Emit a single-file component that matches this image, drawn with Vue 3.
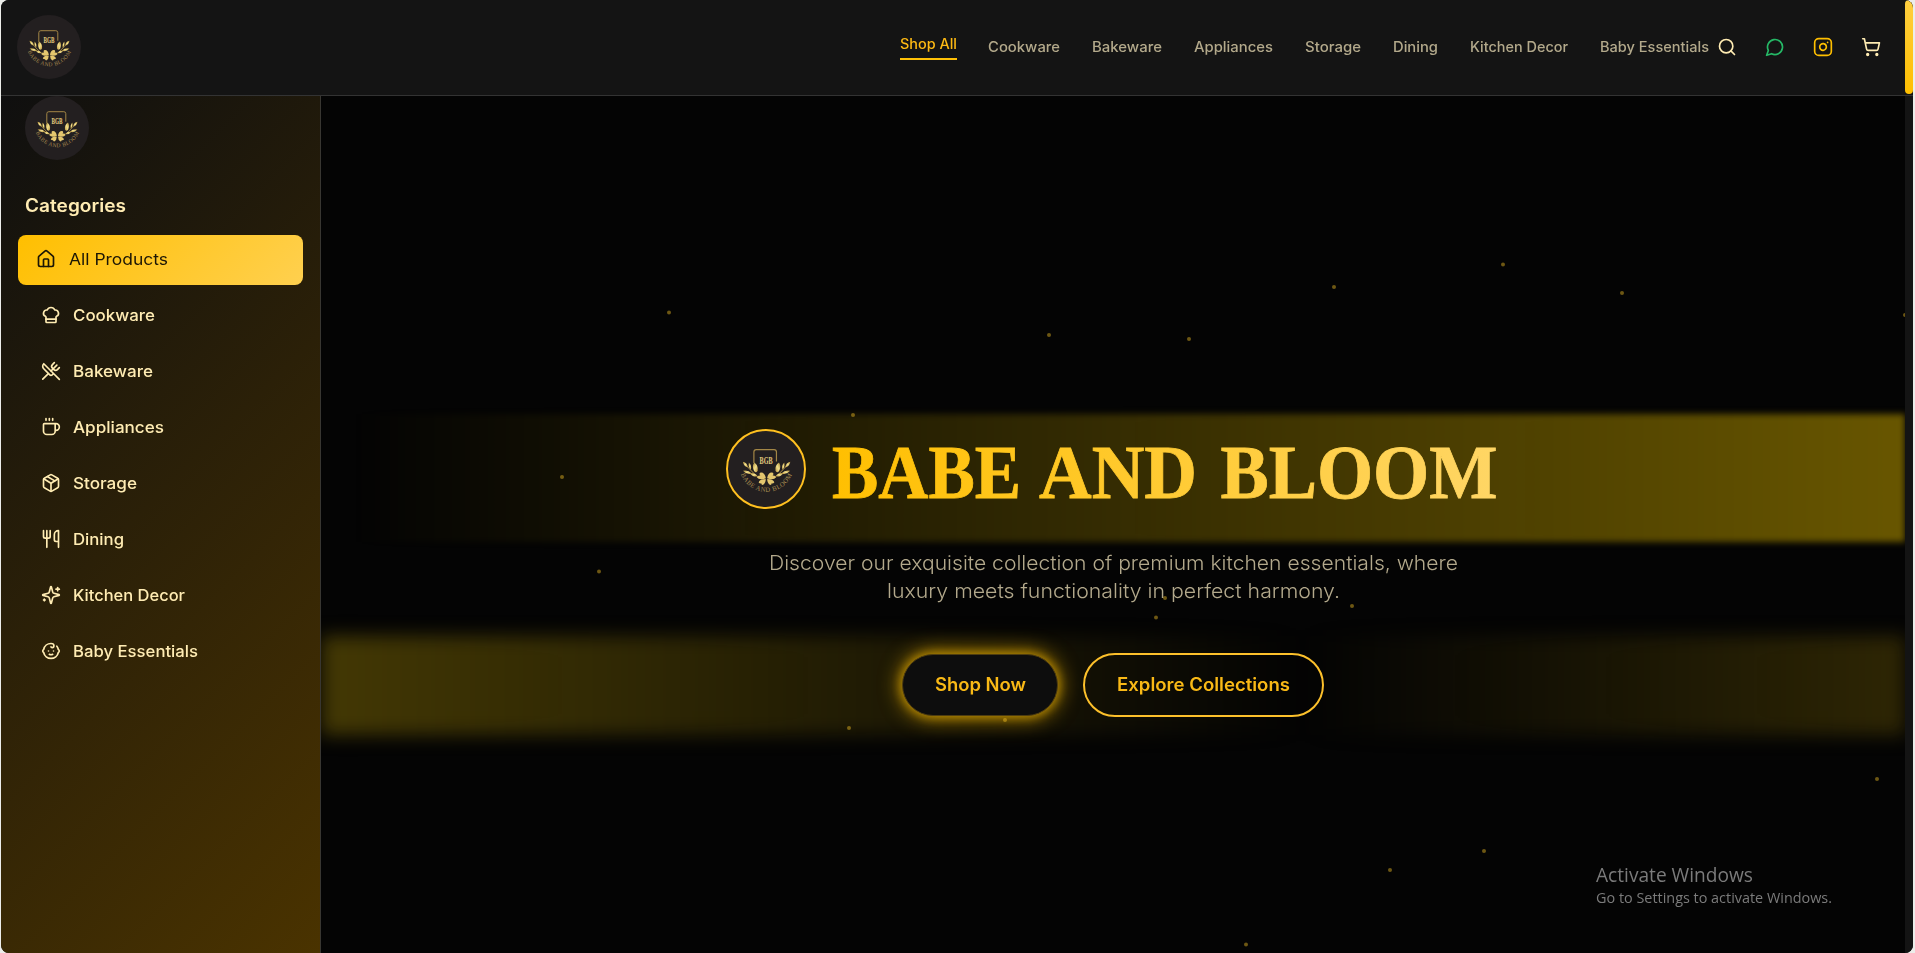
<script setup>
const nav = [
  { label: 'Shop All', width: 57, active: true },
  { label: 'Cookware', width: 72 },
  { label: 'Bakeware', width: 70 },
  { label: 'Appliances', width: 79 },
  { label: 'Storage', width: 56 },
  { label: 'Dining', width: 45 },
  { label: 'Kitchen Decor', width: 98 },
  { label: 'Baby Essentials', width: 109 },
]

const categories = [
  { label: 'Cookware', width: 82, icon: 'chef' },
  { label: 'Bakeware', width: 80, icon: 'utensilsCrossed' },
  { label: 'Appliances', width: 91, icon: 'coffee' },
  { label: 'Storage', width: 64, icon: 'box' },
  { label: 'Dining', width: 51, icon: 'utensils' },
  { label: 'Kitchen Decor', width: 112, icon: 'sparkles' },
  { label: 'Baby Essentials', width: 125, icon: 'baby' },
]

const icons = {
  home: ['M15 21v-8a1 1 0 0 0-1-1h-4a1 1 0 0 0-1 1v8', 'M3 10a2 2 0 0 1 .709-1.528l7-5.999a2 2 0 0 1 2.582 0l7 5.999A2 2 0 0 1 21 10v9a2 2 0 0 1-2 2H5a2 2 0 0 1-2-2z'],
  chef: ['M17 21a1 1 0 0 0 1-1v-5.35c0-.457.316-.844.727-1.041a4 4 0 0 0-2.134-7.589 5 5 0 0 0-9.186 0 4 4 0 0 0-2.134 7.588c.411.198.727.585.727 1.041V20a1 1 0 0 0 1 1Z', 'M6 17h12'],
  utensilsCrossed: ['m16 2-2.3 2.3a3 3 0 0 0 0 4.2l1.8 1.8a3 3 0 0 0 4.2 0L22 8', 'M15 15 3.3 3.3a4.2 4.2 0 0 0 0 6l7.3 7.3c.7.7 2 .7 2.8 0L15 15Zm0 0 7 7', 'm2.1 21.8 6.4-6.3', 'm19 5-7 7'],
  coffee: ['M10 2v2', 'M14 2v2', 'M6 2v2', 'M16 8a1 1 0 0 1 1 1v8a4 4 0 0 1-4 4H7a4 4 0 0 1-4-4V9a1 1 0 0 1 1-1h14a4 4 0 1 1 0 8h-1'],
  box: ['M11 21.73a2 2 0 0 0 2 0l7-4A2 2 0 0 0 21 16V8a2 2 0 0 0-1-1.73l-7-4a2 2 0 0 0-2 0l-7 4A2 2 0 0 0 3 8v8a2 2 0 0 0 1 1.73z', 'M12 22V12', 'm3.3 7 7.703 4.734a2 2 0 0 0 1.994 0L20.7 7', 'm7.5 4.27 9 5.15'],
  utensils: ['M3 2v7c0 1.1.9 2 2 2h4a2 2 0 0 0 2-2V2', 'M7 2v20', 'M21 15V2a5 5 0 0 0-5 5v6c0 1.1.9 2 2 2h3Zm0 0v7'],
  sparkles: ['M9.937 15.5A2 2 0 0 0 8.5 14.063l-6.135-1.582a.5.5 0 0 1 0-.962L8.5 9.936A2 2 0 0 0 9.937 8.5l1.582-6.135a.5.5 0 0 1 .963 0L14.063 8.5A2 2 0 0 0 15.5 9.937l6.135 1.581a.5.5 0 0 1 0 .964L15.5 14.063a2 2 0 0 0-1.437 1.437l-1.582 6.135a.5.5 0 0 1-.963 0z', 'M20 3v4', 'M22 5h-4', 'M4 17v2', 'M5 18H3'],
  baby: ['M9 12h.01', 'M15 12h.01', 'M10 16c.5.3 1.2.5 2 .5s1.5-.2 2-.5', 'M19 6.3a9 9 0 0 1 1.8 3.9 2 2 0 0 1 0 3.6 9 9 0 0 1-17.6 0 2 2 0 0 1 0-3.6A9 9 0 0 1 12 3c2 0 3.5 1.1 3.5 2.5s-.9 2.5-2 2.5c-.8 0-1.5-.4-1.5-1'],
  search: ['M19 11a8 8 0 1 1-16 0a8 8 0 0 1 16 0', 'm21 21-4.3-4.3'],
  message: ['M7.9 20A9 9 0 1 0 4 16.1L2 22Z'],
  instagram: ['M7 2h10a5 5 0 0 1 5 5v10a5 5 0 0 1-5 5H7a5 5 0 0 1-5-5V7a5 5 0 0 1 5-5z', 'M16 11.37A4 4 0 1 1 12.63 8 4 4 0 0 1 16 11.37z', 'M17.5 6.5h.01'],
  cart: ['M9 21a1 1 0 1 1-2 0a1 1 0 0 1 2 0', 'M20 21a1 1 0 1 1-2 0a1 1 0 0 1 2 0', 'M2.05 2.05h2l2.66 12.42a2 2 0 0 0 2 1.58h9.78a2 2 0 0 0 1.95-1.57l1.65-7.43H5.12'],
}

const actions = ['search', 'message', 'instagram', 'cart']

/* Centres of the floating particles, relative to the hero area */
const particles = [
  [348, 216.5], [728, 239], [868, 243], [1013, 191], [1182, 168.5], [1301, 197],
  [1584, 219], [532, 319], [241, 381], [278, 475.5], [844, 502], [1031, 510],
  [835, 521.5], [684, 624], [528, 632], [1556, 683], [1163, 755], [1069, 774], [925, 848.5],
]

/* Stretches a label's letters to the given width in pixels */
const vFit = {
  mounted(el, { value }) {
    const natural = el.getBoundingClientRect().width
    el.style.width = `${value}px`
    el.style.transform = `scaleX(${value / natural})`
  },
}
</script>

<template>
  <div class="window">
    <svg class="defs" width="0" height="0" aria-hidden="true">
      <defs>
        <linearGradient id="foil" x1="0" y1="0" x2="1" y2="1">
          <stop offset="0" stop-color="#a8842f" />
          <stop offset=".5" stop-color="#f3e08c" />
          <stop offset="1" stop-color="#b48f38" />
        </linearGradient>
        <path id="arc" d="M10.8 36.5A23.2 23.2 0 0 0 54.2 36" />
        <g id="sprig">
          <path d="M13.5 26.8Q17 31 23.5 37.5" fill="none" stroke="#cdaa50" stroke-width=".7" />
          <path d="M12.5 25.8q4 .8 4.2 5q-3.4-1.2-4.2-5z" />
          <path d="M12.6 33.5q4-1 7.6 2.2q-4.2 1.5-7.6-2.2z" />
          <path d="M17.6 26.5q2.7 2.7 1.6 6.2q-2.5-2.6-1.6-6.2z" />
          <path d="M22 26.5q3.7 2.3 3 7q-1.5 2.5-3 .2q-2-3.8 0-7.2z" />
          <path d="M18.5 35.5q4-.5 6.5 2.6q-4 1-6.5-2.6z" />
        </g>
        <symbol id="emblem" viewBox="0 0 64 64">
          <g fill="url(#foil)">
            <path d="M21.8 27V17.7q0-2 2-2h15q2 0 2 2v8" fill="none" stroke="#a38646" stroke-width="1" />
            <use href="#sprig" />
            <use href="#sprig" transform="matrix(-1 0 0 1 65 0)" />
            <path fill="#e3c66e" d="M31.9 39.8q-1-5.6-5-4.6q-.8 1.4.3 2.4q-2.6-.2-3 1.4q2.2 2.8 7.7.8zM32.9 39.8q1-5.6 5-4.6q.8 1.4-.3 2.4q2.6-.2 3 1.4q-2.2 2.8-7.7.8zM31.8 40.4q-5.5.2-6 3q1 1 2.2.7q0 1.3 1.3 1.3q2.5-1.5 2.5-5zM33 40.4q5.5.2 6 3q-1 1-2.2.7q0 1.3-1.3 1.3q-2.5-1.5-2.5-5z" />
          </g>
          <text class="mono" x="26.6" y="27.8" textLength="11" lengthAdjust="spacingAndGlyphs">BGB</text>
          <text class="ring"><textPath href="#arc" textLength="55">BABE AND BLOOM</textPath></text>
        </symbol>
      </defs>
    </svg>

    <header class="topbar">
      <svg class="logo"><use href="#emblem" /></svg>
      <nav class="nav">
        <a v-for="n in nav" :key="n.label" :class="['nav-link', { active: n.active }]"><span v-fit="n.width">{{ n.label }}</span></a>
      </nav>
      <div class="actions">
        <svg v-for="a in actions" :key="a" :class="['icon', a]" viewBox="0 0 24 24"><path v-for="d in icons[a]" :key="d" :d="d" /></svg>
      </div>
    </header>

    <div class="body">
      <aside class="sidebar">
        <svg class="logo"><use href="#emblem" /></svg>
        <h2 class="side-title"><span v-fit="101">Categories</span></h2>
        <a class="all">
          <svg class="icon" viewBox="0 0 24 24"><path v-for="d in icons.home" :key="d" :d="d" /></svg>
          <span v-fit="99">All Products</span>
        </a>
        <a v-for="c in categories" :key="c.label" class="category">
          <svg class="icon" viewBox="0 0 24 24"><path v-for="d in icons[c.icon]" :key="d" :d="d" /></svg>
          <span v-fit="c.width">{{ c.label }}</span>
        </a>
      </aside>

      <main class="hero">
        <div class="beam beam-top"></div>
        <div class="beam beam-bottom"></div>
        <div class="brand">
          <svg class="brand-logo"><use href="#emblem" /></svg>
          <svg class="brand-name" width="668" height="80" role="img">
            <defs>
              <linearGradient id="gold" gradientUnits="userSpaceOnUse" x1="0" y1="0" x2="668" y2="80">
                <stop offset="0" stop-color="#ffbf00" />
                <stop offset="1" stop-color="#ffd666" />
              </linearGradient>
            </defs>
            <text x="0" y="69" textLength="189" lengthAdjust="spacingAndGlyphs">BABE</text>
            <text x="207" y="69" textLength="158" lengthAdjust="spacingAndGlyphs">AND</text>
            <text x="388.5" y="69" textLength="277" lengthAdjust="spacingAndGlyphs">BLOOM</text>
          </svg>
        </div>
        <p class="lead">
          <span v-fit="689">Discover our exquisite collection of premium kitchen essentials, where</span><br />
          <span v-fit="453">luxury meets functionality in perfect harmony.</span>
        </p>
        <div class="buttons">
          <button class="btn primary"><span v-fit="91">Shop Now</span></button>
          <button class="btn outline"><span v-fit="173">Explore Collections</span></button>
        </div>
        <svg class="particles" width="1584" height="857">
          <circle v-for="([x, y], i) in particles" :key="i" :cx="x" :cy="y" r="2" />
        </svg>
      </main>
      <div class="track"></div>
    </div>

    <div class="thumb"></div>
    <div class="watermark">
      <div class="wm-title"><span v-fit="157">Activate Windows</span></div>
      <div class="wm-text"><span v-fit="236">Go to Settings to activate Windows.</span></div>
    </div>
  </div>
</template>

<style>
body {
  background: #ecedea;
  overflow: hidden;
}
</style>

<style scoped>
.window {
  position: relative;
  display: flex;
  flex-direction: column;
  box-sizing: border-box;
  width: 1912px;
  height: 953px;
  margin-left: 1px;
  border-radius: 8px;
  overflow: hidden;
  background: #040404;
  color: #ffecb3;
  font-family: Inter, "Open Sans", sans-serif;
}
.window span {
  display: inline-block;
  text-align: left;
  white-space: nowrap;
  transform-origin: 0 50%;
}
.defs {
  position: absolute;
}
.logo {
  width: 64px;
  height: 64px;
  flex: none;
  border-radius: 50%;
  background: #231f20;
}
.mono {
  font: bold 8px "Liberation Serif", serif;
  fill: #e6cc7e;
}
.ring {
  font: 5.6px "Liberation Serif", serif;
  fill: #a98d50;
}
.icon {
  width: 20px;
  height: 20px;
  flex: none;
  fill: none;
  stroke: currentColor;
  stroke-width: 2;
  stroke-linecap: round;
  stroke-linejoin: round;
}
.topbar {
  display: flex;
  align-items: center;
  box-sizing: border-box;
  height: 96px;
  flex: none;
  padding: 0 32px 2px 16px;
  background: #141414;
  border-bottom: 1px solid #333;
}
.nav {
  display: flex;
  align-items: center;
  gap: 32px;
  margin-left: auto;
}
.nav-link {
  font-size: 14px;
  font-weight: 500;
  line-height: 20px;
  color: #b3a98b;
}
.nav-link.active {
  margin-right: -1px;
  padding-bottom: 4px;
  border-bottom: 2px solid #ffc107;
  color: #fdb913;
}
.actions {
  display: flex;
  gap: 28px;
  margin-left: 8px;
}
.message {
  color: #25b866;
}
.instagram {
  color: #ffbf00;
}
.body {
  display: flex;
  flex: 1;
}
.sidebar {
  display: flex;
  flex-direction: column;
  box-sizing: border-box;
  width: 320px;
  padding: 0 17px;
  border-right: 1px solid #383631;
  background: linear-gradient(135deg, #0f0f0f, #4a3300);
}
.sidebar .logo {
  margin-left: 7px;
}
.side-title {
  margin: 32px 0 16px 7px;
  font-size: 18px;
  font-weight: 600;
  line-height: 27px;
}
.all {
  display: flex;
  align-items: center;
  box-sizing: border-box;
  height: 50px;
  padding: 0 17px 2px 17.5px;
  gap: 13.5px;
  border-radius: 8px;
  background: linear-gradient(135deg, #ffbf00, #ffd04f);
  color: #1c1605;
  font-size: 16px;
}
.category {
  display: flex;
  align-items: center;
  height: 56px;
  padding-left: 23px;
  gap: 12px;
  font-size: 16px;
  font-weight: 500;
}
.all + .category {
  margin-top: 2px;
}
.hero {
  position: relative;
  width: 1584px;
  overflow: hidden;
  background: #040404;
}
.track {
  width: 8px;
  background: #141414;
}
.thumb {
  position: absolute;
  top: 0;
  right: 0;
  width: 8px;
  height: 94px;
  border-radius: 4px;
  background: linear-gradient(#ffcf40, #ffbf00);
}
.beam {
  position: absolute;
  left: 0;
  right: 0;
}
.beam-top {
  top: 318px;
  height: 128px;
  background: linear-gradient(90deg, rgba(104, 86, 0, 0) 2%, #685600);
  filter: blur(3px);
}
.beam-bottom {
  top: 540px;
  height: 99px;
  background: linear-gradient(90deg, #433804, rgba(67, 56, 4, 0) 62%, #2e2604);
  filter: blur(9px);
}
.brand {
  position: relative;
  display: flex;
  gap: 26px;
  margin: 333px 0 0 405px;
}
.brand-logo {
  box-sizing: border-box;
  width: 80px;
  height: 80px;
  border: 2px solid #ffc020;
  border-radius: 50%;
  background: #231f20;
}
.brand-name {
  overflow: visible;
}
.brand-name text {
  font: bold 77px "Liberation Serif", serif;
  fill: url(#gold);
  stroke: url(#gold);
  stroke-width: 0.8;
}
.lead {
  position: relative;
  margin: 40px 0 0;
  text-align: center;
  font-size: 20px;
  font-weight: 300;
  line-height: 28px;
  color: #b3a98c;
}
.buttons {
  position: relative;
  display: flex;
  align-items: center;
  gap: 25px;
  margin: 48px 0 0 581px;
}
.btn {
  box-sizing: border-box;
  padding: 0 0 2px;
  border-radius: 32px;
  font: 600 18px Inter, sans-serif;
  color: #f9b916;
}
.primary {
  width: 156px;
  height: 62px;
  border: 1px solid #4d3c10;
  background: #0d0d0d;
  box-shadow: 0 0 8px 2px rgba(255, 191, 0, 0.4), 0 0 20px 3px rgba(255, 191, 0, 0.6);
}
.outline {
  width: 241px;
  height: 64px;
  border: 2px solid #fcc02b;
  background: transparent;
}
.particles {
  position: absolute;
  inset: 0;
  fill: #ffc928;
  opacity: 0.42;
}
.watermark {
  position: absolute;
  left: 1595px;
  top: 862px;
  font-family: "Open Sans", "Noto Sans", sans-serif;
  color: #7b7b7b;
}
.wm-title {
  font-size: 19.5px;
  line-height: 26px;
}
.wm-text {
  font-size: 14px;
  line-height: 20px;
}
</style>
